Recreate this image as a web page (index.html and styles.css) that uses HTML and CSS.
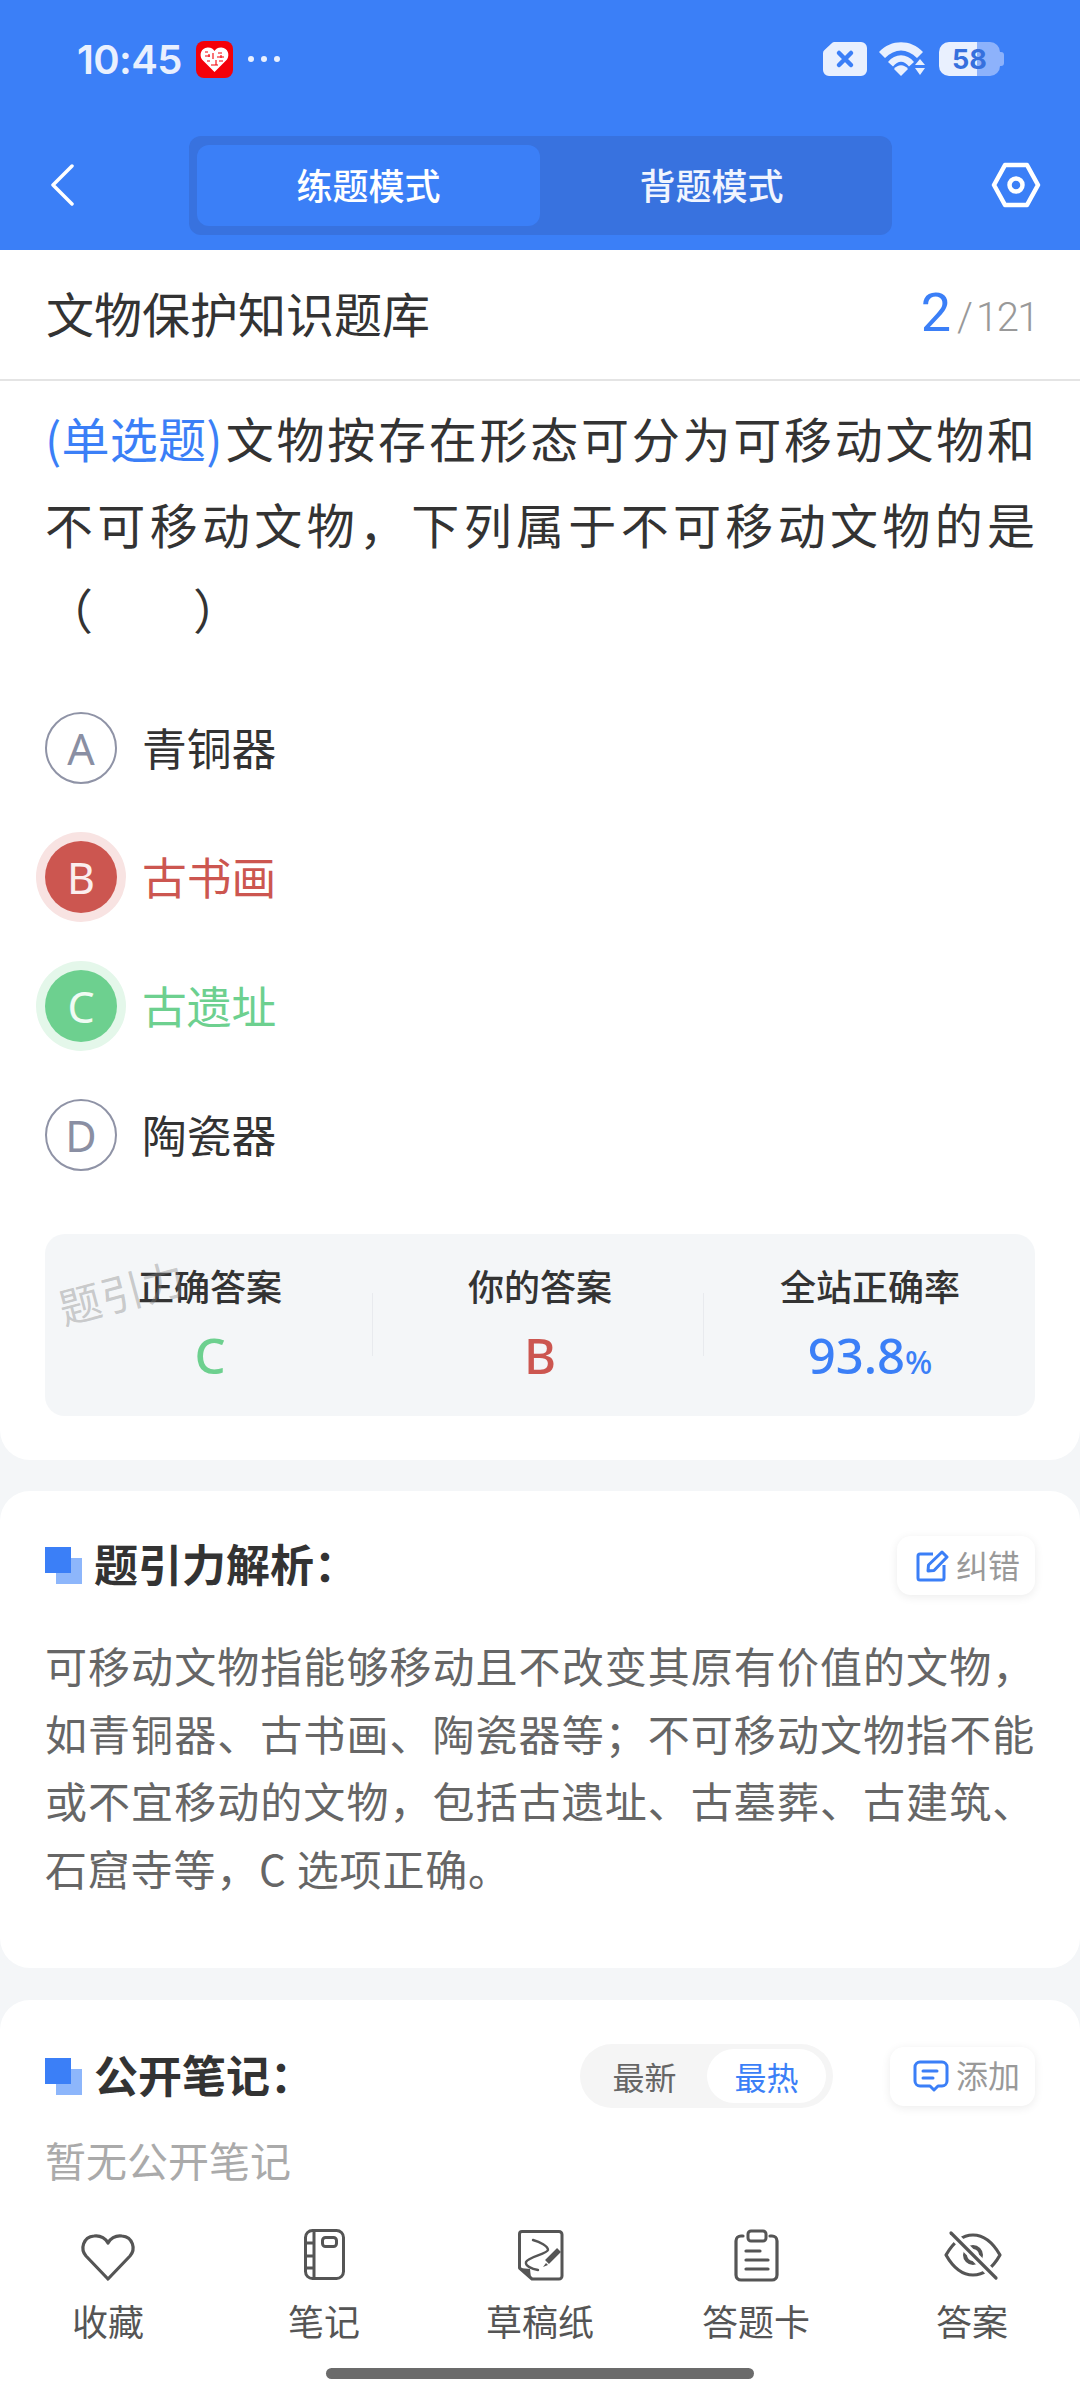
FILE: index.html
```html
<!DOCTYPE html>
<html lang="zh-CN">
<head>
    <meta charset="UTF-8">
    <meta name="viewport" content="width=device-width, initial-scale=1.0">
    <title>文物保护知识题库</title>
    <link rel="stylesheet" href="styles.css">
</head>
<body>
<div class="page">
    <header class="top">
        <div class="status">
            <div class="status-left">
                <span class="time">10:45</span>
                <svg class="app-icon" width="37" height="37" viewBox="0 0 37 37">
                    <rect width="37" height="37" rx="8" fill="#f40009"/>
                    <path d="M18.5 31 L6 18.5 C3 14 5 7 11.5 6.5 C15 6.3 17.5 8 18.5 10 C19.5 8 22 6.3 25.5 6.5 C32 7 34 14 31 18.5 Z" fill="#fff"/>
                    <path d="M9 11h3M9 15h5M11 20h3M15 24h7M22 12h4M21 16h7M23 20h4M17 12v6M20 19v5M13 13v3M25 14v3" stroke="#f40009" stroke-width="1.1"/>
                </svg>
                <span class="dots"><i></i><i></i><i></i></span>
            </div>
            <div class="status-right">
                <svg width="44" height="34" viewBox="0 0 44 34">
                    <path d="M12 0 H38 a6 6 0 0 1 6 6 V28 a6 6 0 0 1 -6 6 H6 a6 6 0 0 1 -6 -6 V11 a4 4 0 0 1 1.5 -3 L9 1 a4 4 0 0 1 3 -1 Z" fill="#e9f0fe"/>
                    <path d="M16 11 L28 23 M28 11 L16 23" stroke="#3b7ff7" stroke-width="4.5" stroke-linecap="round"/>
                </svg>
                <svg width="48" height="34" viewBox="0 0 48 34">
                    <path d="M0 10 C12 -3 32 -3 44 10 L38 16 C28 6 16 6 6 16 Z" fill="#e9f0fe"/>
                    <path d="M9 20 C16 11 28 11 35 20 L30 24.5 C25 18 19 18 14 24.5 Z" fill="#e9f0fe"/>
                    <path d="M15 27 C19 22 25 22 29 27 L22 34 Z" fill="#e9f0fe"/>
                    <path d="M36 23 L41 17 L46 23 Z M36 26 L46 26 L41 33 Z" fill="#e9f0fe"/>
                </svg>
                <div class="battery">
                    <div class="battery-body"><span>58</span></div>
                    <i class="battery-nub"></i>
                </div>
            </div>
        </div>
        <nav class="nav">
            <svg width="24" height="42" viewBox="0 0 24 42">
                <path d="M22 2 L3 21 L22 40" fill="none" stroke="#fff" stroke-width="3.5" stroke-linecap="round" stroke-linejoin="round"/>
            </svg>
            <div class="mode-tabs">
                <div class="mode active">练题模式</div>
                <div class="mode">背题模式</div>
            </div>
            <svg class="nav-setting" width="50" height="46" viewBox="0 0 50 46">
                <path d="M14 3 H36 L47 23 L36 43 H14 L3 23 Z" fill="none" stroke="#fff" stroke-width="4.5" stroke-linejoin="round"/>
                <circle cx="25" cy="23" r="6.5" fill="none" stroke="#fff" stroke-width="4.5"/>
            </svg>
        </nav>
    </header>

    <section class="card question-card">
        <div class="bank-row">
            <div class="bank-name">文物保护知识题库</div>
            <div class="counter"><b>2</b><span class="slash">/</span><span class="total">121</span></div>
        </div>
        <div class="question-body">
            <p class="question"><span class="tag">(单选题)</span>文物按存在形态可分为可移动文物和不可移动文物，下列属于不可移动文物的是（<span class="blank"></span>）</p>
            <ul class="options">
                <li class="option"><span class="letter">A</span><span class="option-text">青铜器</span></li>
                <li class="option wrong"><span class="letter">B</span><span class="option-text">古书画</span></li>
                <li class="option right"><span class="letter">C</span><span class="option-text">古遗址</span></li>
                <li class="option"><span class="letter">D</span><span class="option-text">陶瓷器</span></li>
            </ul>
            <div class="stats">
                <span class="watermark">题引力</span>
                <div class="stat">
                    <div class="stat-label">正确答案</div>
                    <div class="stat-value green">C</div>
                </div>
                <div class="stat">
                    <div class="stat-label">你的答案</div>
                    <div class="stat-value red">B</div>
                </div>
                <div class="stat">
                    <div class="stat-label">全站正确率</div>
                    <div class="stat-value blue">93.8<small>%</small></div>
                </div>
            </div>
        </div>
    </section>

    <section class="card analysis-card">
        <div class="section-head">
            <h3 class="section-title"><i class="mark"></i>题引力解析：</h3>
            <div class="chip">
                <svg width="34" height="34" viewBox="0 0 34 34">
                    <path d="M18 5 H5 a2 2 0 0 0 -2 2 V29 a2 2 0 0 0 2 2 H27 a2 2 0 0 0 2 -2 V16" fill="none" stroke="#3b7ff7" stroke-width="3"/>
                    <path d="M13 22 L13.5 16 L27 3 L32 8 L19 21.5 Z" fill="none" stroke="#3b7ff7" stroke-width="3" stroke-linejoin="round"/>
                </svg>
                <span>纠错</span>
            </div>
        </div>
        <p class="analysis">可移动文物指能够移动且不改变其原有价值的文物，如青铜器、古书画、陶瓷器等；不可移动文物指不能或不宜移动的文物，包括古遗址、古墓葬、古建筑、石窟寺等，C 选项正确。</p>
    </section>

    <section class="card notes-card">
        <div class="section-head">
            <h3 class="section-title"><i class="mark"></i>公开笔记：</h3>
            <div class="notes-tools">
                <div class="sort">
                    <span class="sort-item">最新</span>
                    <span class="sort-item active">最热</span>
                </div>
                <div class="chip chip-add">
                    <svg width="36" height="32" viewBox="0 0 36 32">
                        <path d="M7 2 H29 a5 5 0 0 1 5 5 V21 a5 5 0 0 1 -5 5 H25 L21 30 L17 26 H7 a5 5 0 0 1 -5 -5 V7 a5 5 0 0 1 5 -5 Z" fill="none" stroke="#3b7ff7" stroke-width="3" stroke-linejoin="round"/>
                        <path d="M10 11 H24 M10 18 H20" stroke="#3b7ff7" stroke-width="3" stroke-linecap="round"/>
                    </svg>
                    <span>添加</span>
                </div>
            </div>
        </div>
        <p class="empty">暂无公开笔记</p>
    </section>

    <footer class="tabbar">
        <div class="tab">
            <svg width="60" height="54" viewBox="0 0 60 54">
                <path d="M30 51 L8 28 C2 21 5 9 16 8 C23 7 28 11 30 15 C32 11 37 7 44 8 C55 9 58 21 52 28 Z" fill="none" stroke="#555" stroke-width="3.2" stroke-linejoin="round"/>
            </svg>
            <span>收藏</span>
        </div>
        <div class="tab">
            <svg width="60" height="54" viewBox="0 0 60 54">
                <rect x="11.5" y="2.5" width="38" height="48" rx="7" fill="none" stroke="#555" stroke-width="3"/>
                <path d="M20 2.5 V50.5 M11.5 15 H20 M11.5 28 H20 M11.5 40 H20" stroke="#555" stroke-width="3"/>
                <rect x="28.5" y="9.5" width="14" height="9" rx="3" fill="none" stroke="#555" stroke-width="3"/>
            </svg>
            <span>笔记</span>
        </div>
        <div class="tab">
            <svg width="60" height="54" viewBox="0 0 60 54">
                <path d="M12 3.5 H49 a3 3 0 0 1 3 3 V48 a3 3 0 0 1 -3 3 H22 L9.5 40 V6 a2.5 2.5 0 0 1 2.5 -2.5 Z" fill="none" stroke="#555" stroke-width="3" stroke-linejoin="round"/>
                <path d="M10 40 L20 41 L21 50 Z" fill="#555"/>
                <path d="M23 12 C30 14 38 18 38 22 C37 26 18 29 16 34 C15 38 22 41 28 42" fill="none" stroke="#555" stroke-width="2.4" stroke-linecap="round"/>
                <path d="M49 22 L37 34" stroke="#555" stroke-width="5.5"/>
                <path d="M36 35 L33 39 L38 37 Z" fill="#555"/>
            </svg>
            <span>草稿纸</span>
        </div>
        <div class="tab">
            <svg width="60" height="54" viewBox="0 0 60 54">
                <path d="M17 8 H15 a5 5 0 0 0 -5 5 V47 a5 5 0 0 0 5 5 H46 a5 5 0 0 0 5 -5 V13 a5 5 0 0 0 -5 -5 H44" fill="none" stroke="#555" stroke-width="3.2" stroke-linecap="round"/>
                <rect x="22" y="3" width="18" height="10" rx="3" fill="none" stroke="#555" stroke-width="3"/>
                <path d="M20 23 H34 M20 32 H42 M20 41 H42" stroke="#555" stroke-width="3.2" stroke-linecap="round"/>
            </svg>
            <span>答题卡</span>
        </div>
        <div class="tab">
            <svg width="60" height="54" viewBox="0 0 60 54">
                <path d="M4 27 C12 13 22 7 31 7 C40 7 50 13 58 27 C50 41 40 47 31 47 C22 47 12 41 4 27 Z" fill="none" stroke="#555" stroke-width="3.2" stroke-linejoin="round"/>
                <circle cx="31" cy="27" r="8" fill="none" stroke="#555" stroke-width="4"/>
                <path d="M9 5 L54 50" stroke="#fff" stroke-width="9"/>
                <path d="M9 5 L54 50" stroke="#555" stroke-width="3.2" stroke-linecap="round"/>
            </svg>
            <span>答案</span>
        </div>
    </footer>
    <div class="home-bar"><i></i></div>
</div>
</body>
</html>
```

FILE: styles.css
```css
* {
    box-sizing: border-box;
}
body {
    margin: 0;
    padding: 0;
    background-color: #f4f6f8;
    font-family: "Noto Sans CJK SC", "Noto Sans", sans-serif;
    color: #333;
}
.page {
    width: 1080px;
    height: 2400px;
    overflow: hidden;
    display: flex;
    flex-direction: column;
}
p, h3, ul {
    margin: 0;
    padding: 0;
}

/* 顶部蓝色区域 */
.top {
    height: 250px;
    background-color: #3b7ff7;
}
.status {
    height: 120px;
    padding: 0 76px 2px 77px;
    display: flex;
    justify-content: space-between;
    align-items: center;
}
.status-left, .status-right {
    display: flex;
    align-items: center;
}
.time {
    font-family: Inter, sans-serif;
    font-size: 40px;
    font-weight: 600;
    letter-spacing: -0.6px;
    color: #e9f0fe;
    width: 119px;
}
.dots {
    display: flex;
    gap: 7px;
    margin-left: 15px;
}
.dots i {
    width: 6px;
    height: 6px;
    border-radius: 50%;
    background-color: #e9f0fe;
}
.status-right {
    gap: 12px;
}
.battery {
    display: flex;
    align-items: center;
}
.battery-body {
    width: 61px;
    height: 34px;
    border-radius: 10px;
    background: linear-gradient(90deg, #e9f0fe 0 62%, #8db2fb 62% 100%);
    display: flex;
    align-items: center;
    justify-content: center;
}
.battery-nub {
    width: 4px;
    height: 14px;
    background-color: #8db2fb;
    border-radius: 0 3px 3px 0;
}
.battery-body span {
    font-family: Inter, sans-serif;
    font-size: 27px;
    font-weight: 700;
    color: #3670dd;
}
.nav {
    height: 130px;
    padding-left: 50px;
    display: grid;
    grid-template-columns: 139px 703px 1fr;
    align-items: center;
}
.mode-tabs {
    height: 99px;
    padding: 9px 8px;
    display: flex;
    background-color: #3872df;
    border-radius: 12px;
}
.mode {
    width: 343px;
    padding-bottom: 3px;
    font-size: 36px;
    font-weight: 500;
    color: #f1f5fe;
    display: flex;
    align-items: center;
    justify-content: center;
    border-radius: 12px;
}
.mode.active {
    background-color: #3b7ff7;
    color: #fff;
}
.nav-setting {
    justify-self: end;
    margin-right: 39px;
}

/* 卡片 */
.card {
    background-color: #fff;
}
.question-card {
    height: 1210px;
    border-radius: 0 0 30px 30px;
}
.bank-row {
    height: 131px;
    padding: 0 42px 5px 46px;
    border-bottom: 2px solid #e4e4e4;
    display: flex;
    justify-content: space-between;
    align-items: center;
}
.bank-name {
    font-size: 48px;
    color: #333;
}
.counter {
    display: flex;
    align-items: baseline;
    font-family: Roboto, sans-serif;
    font-size: 40px;
    font-weight: 300;
    color: #999;
}
.counter b {
    font-family: Roboto, sans-serif;
    font-size: 54px;
    font-weight: 400;
    color: #3b7ff7;
}
.slash {
    margin: 0 3px 0 6px;
}
.total {
    letter-spacing: -1.5px;
}
.question-body {
    padding: 14px 45px 0;
}
.question {
    width: 992px;
    font-size: 48px;
    line-height: 85.5px;
    letter-spacing: 2px;
    text-align: justify;
}
.tag {
    margin-right: 3px;
    color: #3b7ff7;
    letter-spacing: -0.5px;
}
.blank {
    display: inline-block;
    width: 98px;
}
.options {
    list-style: none;
    margin-top: 32px;
}
.option {
    height: 129px;
    display: flex;
    align-items: center;
    font-size: 44.8px;
}
.option-text {
    margin-bottom: 4px;
}
.letter {
    width: 72px;
    height: 72px;
    margin-right: 25px;
    border: 2px solid #8f93a6;
    border-radius: 50%;
    display: flex;
    align-items: center;
    justify-content: center;
    font-family: "Noto Sans", sans-serif;
    font-size: 43px;
    font-weight: 400;
    color: #8a8fa3;
}
.wrong {
    color: #cc5650;
}
.wrong .letter {
    background-color: #cc5650;
    border: none;
    color: #fbeeee;
    box-shadow: 0 0 0 9px #f8e3e2;
}
.right {
    color: #6dd08f;
}
.right .letter {
    background-color: #6dd08f;
    border: none;
    color: #f0fbf4;
    box-shadow: 0 0 0 9px #e4f7ea;
}
.stats {
    position: relative;
    height: 182px;
    margin-top: 34px;
    padding-top: 31px;
    background: linear-gradient(#e8eaee, #e8eaee) no-repeat 327px 59px / 1px 63px,
        linear-gradient(#e8eaee, #e8eaee) no-repeat 658px 59px / 1px 63px,
        #f4f6f8;
    border-radius: 20px;
    display: flex;
}
.stat {
    flex: 1;
    text-align: center;
}
.stat-label {
    font-size: 36px;
    font-weight: 500;
    line-height: 40px;
}
.stat-value {
    margin-top: 20px;
    font-family: "Noto Sans", sans-serif;
    font-size: 49px;
    font-weight: 500;
    line-height: 60px;
}
.stat-value small {
    font-size: 32px;
}
.green {
    color: #6dd08f;
}
.red {
    color: #cc5650;
}
.blue {
    color: #3b7ff7;
}
.watermark {
    position: absolute;
    left: 12px;
    top: 26px;
    font-size: 42px;
    letter-spacing: 1px;
    color: rgba(130, 130, 130, 0.4);
    transform: rotate(-15deg);
    white-space: nowrap;
}
.analysis-card {
    height: 477px;
    margin-top: 31px;
    padding: 45px 45px 0;
    border-radius: 30px;
}
.notes-card {
    flex: 1;
    margin-top: 32px;
    padding: 44px 45px 0;
    border-radius: 30px 30px 0 0;
}
.section-head {
    display: flex;
    justify-content: space-between;
    align-items: center;
}
.section-title {
    display: flex;
    align-items: center;
    padding-bottom: 5px;
    font-size: 44px;
    font-weight: 700;
    line-height: 54px;
    color: #333;
}
.mark {
    width: 37px;
    height: 37px;
    margin: 5px 12px 0 0;
    background: linear-gradient(#3b7ff7, #3b7ff7) no-repeat left top / 26px 26px,
        linear-gradient(#8db6fb, #8db6fb) no-repeat right bottom / 26px 26px;
}
.chip {
    height: 59px;
    padding: 0 15px 0 18px;
    display: flex;
    align-items: center;
    gap: 7px;
    background-color: #fff;
    border-radius: 14px;
    box-shadow: 0 2px 10px rgba(0, 0, 0, 0.08);
    font-size: 32px;
    color: #999;
}
.chip span {
    margin-bottom: 4px;
}
.chip-add {
    padding-left: 23px;
}
.analysis {
    margin-top: 36px;
    width: 990px;
    font-size: 42px;
    line-height: 67.7px;
    letter-spacing: 0.8px;
    color: #666;
    text-align: justify;
}
.notes-tools {
    display: flex;
    align-items: center;
    gap: 57px;
}
.sort {
    height: 64px;
    width: 253px;
    padding: 5px 7px 5px 0;
    display: flex;
    justify-content: space-between;
    background-color: #f5f5f5;
    border-radius: 32px;
    font-size: 32px;
}
.sort-item {
    width: 119px;
    padding-left: 10px;
    display: flex;
    align-items: center;
    justify-content: center;
    color: #666;
}
.sort-item.active {
    padding-left: 0;
    background-color: #fff;
    border-radius: 27px;
    color: #3b7ff7;
}
.empty {
    margin-top: 21px;
    font-size: 41px;
    line-height: 60px;
    color: #aaa;
}

/* 底部栏 */
.tabbar {
    height: 134px;
    background-color: #fff;
    display: grid;
    grid-template-columns: repeat(5, 216px);
}
.tab {
    display: flex;
    flex-direction: column;
    align-items: center;
    font-size: 36px;
    line-height: 50px;
    color: #555;
}
.tab span {
    margin-top: 13px;
}
.home-bar {
    height: 38px;
    background-color: #fff;
    display: flex;
    justify-content: center;
}
.home-bar i {
    width: 428px;
    height: 11px;
    margin-top: 6px;
    background-color: #6b6b6b;
    border-radius: 6px;
}
```
